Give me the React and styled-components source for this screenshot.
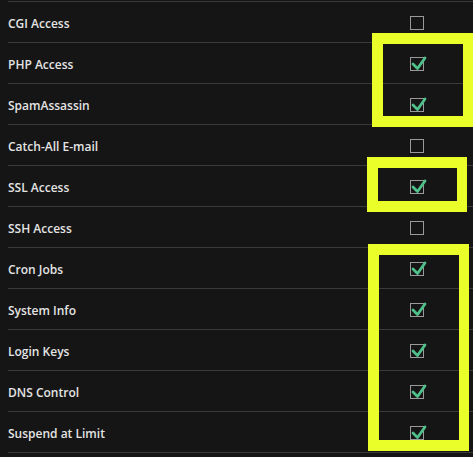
import React from "react";
import styled, { createGlobalStyle } from "styled-components";

const Global = createGlobalStyle`
  html, body { margin: 0; padding: 0; background: #151515; }
  body { font-family: "Open Sans", "Noto Sans", sans-serif; }
`;

const Page = styled.div`
  position: relative;
  width: 473px;
  height: 457px;
  overflow: hidden;
  background: #151515;
  padding-top: 1px;
  box-sizing: border-box;
`;

const Table = styled.div`
  margin-left: 8px;
  border-top: 1px solid #3a3a3a;
  display: flex;
  flex-direction: column;
`;

const Row = styled.div`
  display: flex;
  align-items: center;
  height: 40px;
  border-bottom: 1px solid #3a3a3a;
`;

const Label = styled.div`
  flex: 1;
  color: #e4e4e4;
  font-size: 12px;
  font-weight: 600;
  padding-top: 2px;
`;

const CheckCell = styled.div`
  width: 90px;
  margin-right: 11px;
  display: flex;
  justify-content: center;
  padding-top: 2px;
`;

const Box = styled.div`
  position: relative;
  width: 14px;
  height: 14px;
  box-sizing: border-box;
  border: 1px solid #9a9a9a;
`;

const Tick = styled.svg`
  position: absolute;
  left: 0px;
  top: -3px;
  overflow: visible;
`;

const Highlight = styled.div`
  position: absolute;
  box-sizing: border-box;
  border: 11px solid #eaff29;
  border-right-width: ${(p) => p.$right || 10}px;
  pointer-events: none;
`;

const Check = ({ checked }) => (
  <Box>
    {checked && (
      <Tick width="16" height="16" viewBox="0 0 16 16">
        <path
          d="M2 9 L6.5 13.5 L14 3"
          fill="none"
          stroke="#4fc08a"
          strokeWidth="2.8"
          strokeLinecap="round"
          strokeLinejoin="round"
        />
      </Tick>
    )}
  </Box>
);

const rows = [
  ["CGI Access", false],
  ["PHP Access", true],
  ["SpamAssassin", true],
  ["Catch-All E-mail", false],
  ["SSL Access", true],
  ["SSH Access", false],
  ["Cron Jobs", true],
  ["System Info", true],
  ["Login Keys", true],
  ["DNS Control", true],
  ["Suspend at Limit", true],
];

const highlights = [
  { left: 372, top: 33, width: 101, height: 94, right: 10 },
  { left: 367, top: 157, width: 100, height: 55, right: 10 },
  { left: 368, top: 244, width: 101, height: 207, right: 10 },
];

export default function App() {
  return (
    <Page>
      <Global />
      <Table>
        {rows.map(([label, checked]) => (
          <Row key={label}>
            <Label>{label}</Label>
            <CheckCell>
              <Check checked={checked} />
            </CheckCell>
          </Row>
        ))}
      </Table>
      {highlights.map((h, i) => (
        <Highlight
          key={i}
          $right={h.right}
          style={{ left: h.left, top: h.top, width: h.width, height: h.height }}
        />
      ))}
    </Page>
  );
}
